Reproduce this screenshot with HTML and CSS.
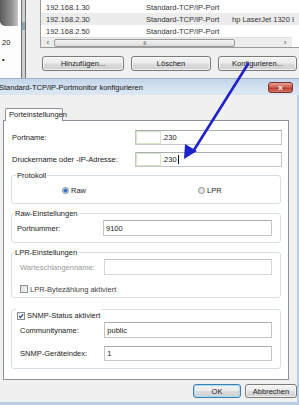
FILE: index.html
```html
<!DOCTYPE html>
<html lang="de">
<head>
<meta charset="utf-8">
<link rel="stylesheet" href="styles.css">
</head>
<body>
<div class="screen">
  <div class="bgwin">
    <div class="side">
      <div class="printer"></div>
      <div class="model">20</div>
      <div class="dot">•</div>
    </div>
    <div class="split"><div class="splitmark"></div></div>
    <div class="main">
      <div class="list">
        <div class="row"><span class="c1">192.168.1.30</span><span class="c2">Standard-TCP/IP-Port</span><span class="c3"></span></div>
        <div class="row sel"><span class="c1">192.168.2.30</span><span class="c2">Standard-TCP/IP-Port</span><span class="c3">hp LaserJet 1320 I</span></div>
        <div class="row"><span class="c1">192.168.2.50</span><span class="c2">Standard-TCP/IP-Port</span><span class="c3"></span></div>
        <div class="hscroll">
          <span class="sarr">&#8249;</span>
          <div class="thumb"><span class="grip">III</span></div>
          <span class="sarr">&#8250;</span>
        </div>
      </div>
      <div class="btns">
        <button class="btn b1">Hinzufügen...</button>
        <button class="btn b2">Löschen</button>
        <button class="btn b3">Konfigurieren...</button>
      </div>
    </div>
  </div>

  <div class="dialog">
    <div class="titlebar">
      <span class="title">Standard-TCP/IP-Portmonitor konfigurieren</span>
      <span class="close">x</span>
    </div>
    <div class="dbody">
      <div class="tabs"><div class="tab">Porteinstellungen</div></div>
      <div class="panel">
        <div class="frow">
          <span class="lbl">Portname:</span>
          <div class="input top"><span class="mask"></span>.230</div>
        </div>
        <div class="frow r2">
          <span class="lbl">Druckername oder -IP-Adresse:</span>
          <div class="input top"><span class="mask"></span>.230<span class="caret"></span></div>
        </div>

        <fieldset class="grp proto">
          <legend class="lg lg-proto">Protokoll</legend>
          <div class="radios">
            <span class="opt o1"><span class="radio on"></span>Raw</span>
            <span class="opt"><span class="radio"></span>LPR</span>
          </div>
        </fieldset>

        <fieldset class="grp raw">
          <legend class="lg">Raw-Einstellungen</legend>
          <div class="gin">
            <div class="grow"><span class="glbl w1">Portnummer:</span><div class="input gi">9100</div></div>
          </div>
        </fieldset>

        <fieldset class="grp lpr">
          <legend class="lg">LPR-Einstellungen</legend>
          <div class="gin in2">
            <div class="grow"><span class="glbl dis">Warteschlangenname:</span><div class="input gi disabled"></div></div>
            <div class="chkrow"><span class="chk"></span>LPR-Bytezählung aktiviert</div>
          </div>
        </fieldset>

        <fieldset class="grp snmp">
          <legend class="lg lg-snmp"><span class="chk on"><svg viewBox="0 0 8 8" width="8" height="8"><path d="M1.3 4.2 L3.2 6.1 L6.8 1.6" fill="none" stroke="#2a3f86" stroke-width="1.5"/></svg></span>SNMP-Status aktiviert</legend>
          <div class="gin in2 snin">
            <div class="grow"><span class="glbl">Communityname:</span><div class="input gi">public</div></div>
            <div class="grow g2"><span class="glbl">SNMP-Geräteindex:</span><div class="input gi short">1</div></div>
          </div>
        </fieldset>
      </div>
      <div class="footer">
        <button class="btn ok">OK</button>
        <button class="btn cancel">Abbrechen</button>
      </div>
    </div>
    <div class="bframe"></div>
  </div>

  <svg class="arrow" width="299" height="405" viewBox="0 0 299 405">
    <line x1="248" y1="64" x2="194" y2="150" stroke="#1f22c8" stroke-width="2.6" stroke-linecap="round"/>
    <polygon points="184,159 185,144 197,151" fill="#1f22c8"/>
  </svg>
</div>
</body>
</html>
```

FILE: styles.css
```css
* { box-sizing: border-box; margin: 0; padding: 0; }
html, body { width: 299px; height: 405px; overflow: hidden; }
body {
  font-family: "Liberation Sans", Arial, sans-serif;
  font-size: 7.5px;
  color: #222;
  background: #f0f0f0;
}
.screen { position: relative; width: 299px; height: 405px; overflow: hidden; }

/* background window */
.bgwin { height: 78px; display: flex; background: #f0f0f0; }
.side { width: 21px; background: #fdfdfd; display: flex; flex-direction: column; }
.printer {
  width: 18px; height: 26px;
  background: linear-gradient(90deg, #5a5a5a, #9a9a9a 70%, #c8c8c8);
  border-bottom-left-radius: 5px;
}
.model { margin-top: 12px; padding-left: 2px; line-height: 9px; }
.dot { margin-top: 8px; padding-left: 2px; line-height: 9px; font-weight: bold; }
.split {
  width: 5px;
  border-left: 1px solid #707070;
  border-right: 1px solid #707070;
  background: #cfcfcf;
  padding-top: 22px;
}
.splitmark { width: 3px; height: 8px; background: #8fa3b8; }
.main { flex: 1; padding-left: 14px; display: flex; flex-direction: column; }
.list {
  height: 48px;
  background: #fff;
  border-left: 1px solid #9c9c9c;
  border-bottom: 1px solid #9c9c9c;
  padding-top: 1px;
  margin-right: -12px;
}
.row { height: 12px; display: flex; align-items: center; color: #333; }
.row.sel { background: #ececec; }
.c1 { width: 105px; padding-left: 5px; }
.c2 { width: 86px; }
.c3 { white-space: nowrap; }
.hscroll {
  height: 10px;
  display: flex;
  align-items: center;
  background: #ececec;
  width: 251px;
  padding: 0 2px;
  border-top: 1px solid #e2e2e2;
}
.sarr { width: 10px; text-align: center; color: #444; font-size: 8px; line-height: 8px; }
.thumb {
  width: 184px; height: 8px;
  margin: 0 2px 0 1px;
  border: 1px solid #9a9a9a;
  border-radius: 2px;
  background: linear-gradient(#f4f4f4, #dcdcdc);
  display: flex; align-items: center; justify-content: center;
}
.grip { font-size: 5px; color: #666; letter-spacing: -0.5px; }
.thumb + .sarr { margin-left: 43px; }

.btns { display: flex; margin-top: 8px; padding-left: 2px; gap: 7px; }
.btn {
  font-family: "Liberation Sans", Arial, sans-serif;
  font-size: 7.5px;
  color: #1a1a1a;
  height: 15px;
  border: 1px solid #7a7a7a;
  border-radius: 3px;
  background: linear-gradient(#f3f3f3 0%, #ebebeb 48%, #dcdcdc 52%, #cfcfcf 100%);
  box-shadow: inset 0 0 0 1px rgba(255,255,255,0.7);
}
.b1 { width: 82px; }
.b2 { width: 80px; }
.b3 { width: 79px; }

/* dialog */
.dialog { height: 327px; display: flex; flex-direction: column; }
.titlebar {
  height: 17px;
  display: flex;
  align-items: center;
  justify-content: space-between;
  background: linear-gradient(#c3d5ea, #d6e3f1 60%, #dce7f2);
  border-top: 1px solid #9fb2c8;
  padding-right: 6px;
}
.title { margin-left: -1px; color: #111; line-height: 10px; padding-top: 2px; }
.close {
  width: 25px; height: 11px;
  border: 1px solid #7a3030;
  border-radius: 3px;
  background: linear-gradient(#e8a493, #c9584b 50%, #b83a30 55%, #d57a66);
  color: #fff;
  font-weight: bold;
  font-size: 8px;
  line-height: 9px;
  text-align: center;
  margin-top: 1px;
}
.dbody {
  flex: 1;
  background: #f0f0f0;
  padding-left: 3px;
  border-right: 2px solid #b9cde3;
  display: flex;
  flex-direction: column;
}
.tabs { height: 25px; display: flex; align-items: flex-end; padding-left: 2px; }
.tab {
  width: 58px; height: 13px;
  border: 1px solid #8d9099;
  border-bottom: none;
  border-radius: 2px 2px 0 0;
  background: #fff;
  line-height: 12px;
  padding-left: 3px;
  margin-bottom: -1px;
  position: relative;
  z-index: 1;
}
.panel {
  width: 286px;
  height: 260px;
  background: #fff;
  border: 1px solid #8d9099;
  padding: 9px 6px 0 8px;
  display: flex;
  flex-direction: column;
}
.frow { display: flex; align-items: center; justify-content: space-between; height: 15px; }
.frow.r2 { margin-top: 7px; }
.lbl { color: #222; }
.input {
  height: 16px;
  border: 1px solid #c2c6cc;
  border-top-color: #a9adb4;
  background: #fff;
  display: flex;
  align-items: center;
  padding-left: 2px;
  color: #222;
}
.input.top { width: 147px; height: 15px; padding-left: 0; }
.mask {
  width: 25px; height: 13px;
  border: 1px solid #d5e6c4;
  margin-right: 1px;
}
.caret { width: 1px; height: 9px; background: #111; margin-left: 1px; }

.grp {
  border: 1px solid #d5dfe5;
  border-radius: 3px;
  margin: 0 1px 0 -1px;
  min-width: 0;
}
.lg { line-height: 9px; padding: 0 1px; margin-left: 2px; color: #222; }
.lg-proto { margin-left: 4px; }
.proto { margin-top: 4px; height: 33px; }
.radios { display: flex; align-items: center; height: 12px; margin-top: 4px; }
.opt { display: flex; align-items: center; gap: 2px; }
.o1 { margin-left: 50px; width: 136px; }
.radio {
  width: 7px; height: 7px;
  border-radius: 50%;
  border: 1px solid #8c8f94;
  background: radial-gradient(#f4f4f4, #d6d6d6);
  display: inline-flex;
  align-items: center;
  justify-content: center;
}
.radio.on::after {
  content: "";
  width: 3px; height: 3px;
  border-radius: 50%;
  background: #2d64b5;
  box-shadow: 0 0 1px 1px #7fb0e6;
}
.raw { margin-top: 5px; height: 34px; }
.gin { padding: 2px 8px 0 5px; }
.grow { display: flex; align-items: center; }
.glbl { width: 86px; }
.glbl.w1 { width: 86px; }
.gi { width: 169px; }
.gi.short { height: 15px; }
.lpr { margin-top: 5px; height: 50px; }
.in2 { padding-left: 8px; }
.in2 .glbl { width: 85px; }
.dis { color: #9a9a9a; }
.input.disabled { border-color: #d4d6d9; border-top-color: #c4c6ca; }
.chkrow { display: flex; align-items: center; gap: 2px; height: 12px; margin-top: 8px; color: #444; }
.chk {
  width: 8px; height: 8px;
  border: 1px solid #8f8f8f;
  background: linear-gradient(135deg, #dcdcdc, #f8f8f8);
  display: inline-flex;
  align-items: center;
  justify-content: center;
}
.chk.on { margin-right: 2px; background: #f2f5fa; }
.chk svg { display: block; }
.snmp { height: 71px; }
.lg-snmp {
  display: flex;
  align-items: center;
  padding-top: 12px;
  line-height: 11px;
  margin-left: 4px;
}
.snin { margin-top: -1px; }
.g2 { margin-top: 8px; }

.footer {
  height: 22px;
  display: flex;
  justify-content: flex-end;
  align-items: center;
  gap: 4px;
}
.footer .btn { height: 14px; }
.ok { width: 48px; border-color: #3c7fb1; box-shadow: inset 0 0 0 1px #a8dcf8; }
.cancel { width: 52px; }
.bframe { height: 3px; background: #b9cde3; }

.arrow { position: absolute; left: 0; top: 0; pointer-events: none; }
```
